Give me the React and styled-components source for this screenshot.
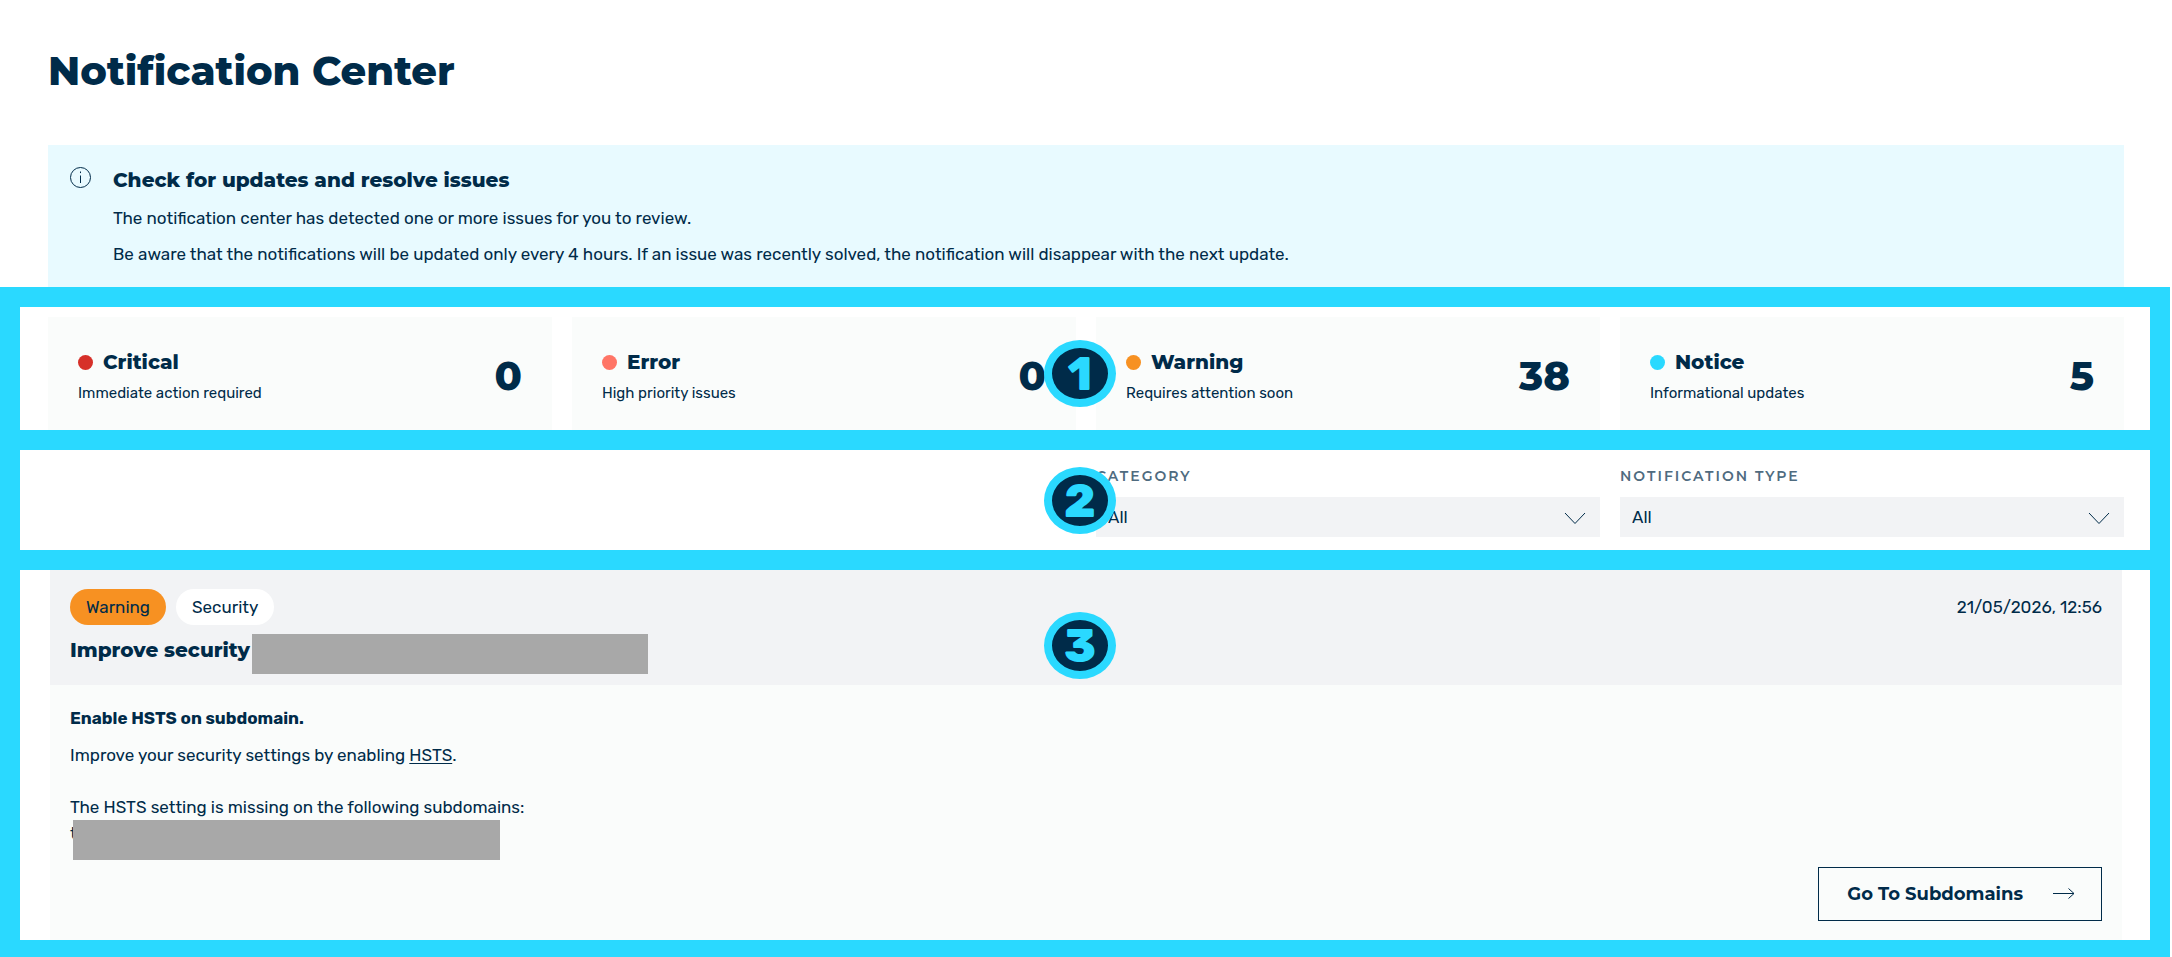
import React from 'react'
import styled, { createGlobalStyle } from 'styled-components'

const GlobalStyle = createGlobalStyle`
    :root {
        --Navy: #002b49;
        --Cyan: #2ad9ff;
        --Pale-cyan: #e8faff;
        --Off-white: #fafcfb;
        --Light-gray: #f2f3f5;
        --Slate: #4f6b7f;
        --Orange: #f79122;
        --Redacted: #a8a8a8;
        --Heading: Montserrat, Inter, sans-serif;
        --Body: Rubik, Inter, sans-serif;
    }
    * {
        box-sizing: border-box;
    }
    body {
        margin: 0;
        background: #fff;
        color: var(--Navy);
        font-family: var(--Body);
        font-size: 17px;
        line-height: 26px;
    }
    h1, h2, h3, p {
        margin: 0;
    }
`

const Page = styled.main`
    display: flex;
    flex-direction: column;
    padding: 47px 2px 0 0;
`

const PageTitle = styled.h1`
    font-family: var(--Heading);
    font-weight: 800;
    font-size: 40px;
    line-height: 48px;
    padding: 0 48px;
    margin-bottom: 50px;
`

const Heading = styled.h2`
    font-family: var(--Heading);
    font-weight: 800;
    font-size: 20px;
    line-height: 26px;
`

const Banner = styled.section`
    display: flex;
    align-items: flex-start;
    gap: 22px;
    margin: 0 46px 0 48px;
    padding: 22px 22px 20px;
    background: var(--Pale-cyan);
`

const BannerText = styled.div`
    display: flex;
    flex-direction: column;
    gap: 10px;

    ${Heading} {
        margin-bottom: 2px;
    }
`

const Frame = styled.section`
    position: relative;
    border: 20px solid var(--Cyan);
    border-top-width: ${props => props.$first ? '20px' : '0'};
    border-bottom-width: ${props => props.$last ? '17px' : '20px'};
`

const StepBadge = styled.span`
    position: absolute;
    top: ${props => props.$top}px;
    left: calc(50% - 41px);
    display: flex;
    align-items: center;
    justify-content: center;
    width: 72px;
    height: 67px;
    border: 8px solid var(--Cyan);
    border-radius: 50%;
    background: var(--Navy);
    color: var(--Cyan);
    font-family: var(--Body);
    font-weight: 800;
    font-size: 47px;
    line-height: 48px;
`

const FourColumns = styled.div`
    display: grid;
    grid-template-columns: repeat(4, 1fr);
    gap: 20px;
    padding: ${props => props.$padding};
`

const StatCard = styled.article`
    display: flex;
    align-items: center;
    justify-content: space-between;
    padding: 32px 30px 27px;
    background: var(--Off-white);
`

const StatName = styled.div`
    display: flex;
    align-items: center;
    gap: 10px;
    margin-bottom: 8px;
`

const Dot = styled.span`
    width: 15px;
    height: 15px;
    border-radius: 50%;
    background: ${props => props.$color};
`

const StatHint = styled.p`
    font-size: 15px;
    line-height: 20px;
`

const StatValue = styled.strong`
    font-family: var(--Heading);
    font-weight: 800;
    font-size: 40px;
    line-height: 48px;
`

const Field = styled.div`
    display: flex;
    flex-direction: column;
    gap: 12px;

    &:first-child {
        grid-column-start: 3;
    }
`

const FieldLabel = styled.label`
    color: var(--Slate);
    font-family: var(--Heading);
    font-weight: 600;
    font-size: 14px;
    line-height: 18px;
    letter-spacing: 2px;
    text-transform: uppercase;
`

const SelectWrap = styled.div`
    position: relative;
    display: flex;

    svg {
        position: absolute;
        right: 14px;
        top: 15px;
        pointer-events: none;
    }
`

const Select = styled.select`
    appearance: none;
    width: 100%;
    height: 40px;
    padding: 0 48px 0 12px;
    border: 0;
    border-radius: 0;
    background: var(--Light-gray);
    color: var(--Navy);
    font-family: var(--Body);
    font-size: 17px;
`

const Notification = styled.article`
    margin: 0 28px 0 30px;
    background: var(--Off-white);
`

const NotificationHeader = styled.header`
    display: flex;
    flex-direction: column;
    gap: 9px;
    padding: 19px 20px 11px;
    background: var(--Light-gray);
`

const TagRow = styled.div`
    display: flex;
    align-items: center;
    gap: 10px;
`

const Tag = styled.span`
    padding: 5px 16px;
    border-radius: 18px;
    background: ${props => props.$color};
`

const Time = styled.time`
    margin-left: auto;
`

const TitleRow = styled.div`
    display: flex;
    align-items: flex-start;
    gap: 2px;

    ${Heading} {
        line-height: 32px;
    }
`

const Redacted = styled.span`
    width: 396px;
    height: 40px;
    background: var(--Redacted);
`

const NotificationBody = styled.div`
    display: flex;
    flex-direction: column;
    padding: 20px 20px 19px;
`

const Lead = styled.p`
    font-weight: 700;
    margin-bottom: 11px;
`

const Text = styled.p`
    margin-bottom: ${props => props.$space || 0}px;
`

const HiddenDomain = styled.span`
    position: relative;
    display: block;

    &::after {
        content: '';
        position: absolute;
        top: 0;
        left: 3px;
        width: 427px;
        height: 40px;
        background: var(--Redacted);
    }
`

const Link = styled.a`
    color: inherit;
    text-underline-offset: 2px;
`

const ActionButton = styled.button`
    display: flex;
    align-items: center;
    align-self: flex-end;
    gap: 30px;
    height: 54px;
    padding: 0 26px 0 28px;
    border: 1px solid var(--Navy);
    background: transparent;
    color: var(--Navy);
    font-family: var(--Heading);
    font-weight: 700;
    font-size: 18px;
`

const stats = [
    { name: 'Critical', hint: 'Immediate action required', value: 0, color: '#d63029' },
    { name: 'Error', hint: 'High priority issues', value: 0, color: '#ff7566' },
    { name: 'Warning', hint: 'Requires attention soon', value: 38, color: '#f79122' },
    { name: 'Notice', hint: 'Informational updates', value: 5, color: '#2ad9ff' },
]

const InfoIcon = () => (
    <svg width="21" height="21" viewBox="0 0 21 21" fill="none" stroke="#002b49" aria-hidden="true">
        <circle cx="10.5" cy="10.5" r="10" />
        <path d="M10.5 8.5v7.5" />
        <path d="M10.5 4.5v1.6" />
    </svg>
)

const Chevron = () => (
    <svg width="22" height="13" viewBox="0 0 22 13" fill="none" stroke="#002b49" aria-hidden="true">
        <path d="M1 1l10 10.5L21 1" />
    </svg>
)

const Arrow = () => (
    <svg width="22" height="12" viewBox="0 0 22 12" fill="none" stroke="#002b49" aria-hidden="true">
        <path d="M0 5.5h21M15.5 .5l5.5 5-5.5 5" />
    </svg>
)

const Filter = ({ id, label }) => (
    <Field>
        <FieldLabel htmlFor={id}>{label}</FieldLabel>
        <SelectWrap>
            <Select id={id}>
                <option>All</option>
            </Select>
            <Chevron />
        </SelectWrap>
    </Field>
)

const App = () => {

    return (
        <>
            <GlobalStyle />
            <Page>
                <PageTitle>Notification Center</PageTitle>
                <Banner>
                    <InfoIcon />
                    <BannerText>
                        <Heading>Check for updates and resolve issues</Heading>
                        <Text>The notification center has detected one or more issues for you to review.</Text>
                        <Text>Be aware that the notifications will be updated only every 4 hours. If an issue was recently solved, the notification will disappear with the next update.</Text>
                    </BannerText>
                </Banner>

                <Frame $first>
                    <FourColumns $padding="10px 26px 0 28px">
                        {stats.map(stat => (
                            <StatCard key={stat.name}>
                                <div>
                                    <StatName>
                                        <Dot $color={stat.color} />
                                        <Heading>{stat.name}</Heading>
                                    </StatName>
                                    <StatHint>{stat.hint}</StatHint>
                                </div>
                                <StatValue>{stat.value}</StatValue>
                            </StatCard>
                        ))}
                    </FourColumns>
                    <StepBadge $top={33}>1</StepBadge>
                </Frame>

                <Frame>
                    <FourColumns $padding="17px 26px 13px 28px">
                        <Filter id="category" label="Category" />
                        <Filter id="type" label="Notification type" />
                    </FourColumns>
                    <StepBadge $top={17}>2</StepBadge>
                </Frame>

                <Frame $last>
                    <Notification>
                        <NotificationHeader>
                            <TagRow>
                                <Tag $color="var(--Orange)">Warning</Tag>
                                <Tag $color="#fff">Security</Tag>
                                <Time>21/05/2026, 12:56</Time>
                            </TagRow>
                            <TitleRow>
                                <Heading>Improve security</Heading>
                                <Redacted />
                            </TitleRow>
                        </NotificationHeader>
                        <NotificationBody>
                            <Lead>Enable HSTS on subdomain.</Lead>
                            <Text $space={26}>Improve your security settings by enabling <Link href="#">HSTS</Link>.</Text>
                            <Text $space={21}>
                                The HSTS setting is missing on the following subdomains:
                                <HiddenDomain>t</HiddenDomain>
                            </Text>
                            <ActionButton type="button">
                                Go To Subdomains
                                <Arrow />
                            </ActionButton>
                        </NotificationBody>
                    </Notification>
                    <StepBadge $top={42}>3</StepBadge>
                </Frame>
            </Page>
        </>
    )
}

export default App
